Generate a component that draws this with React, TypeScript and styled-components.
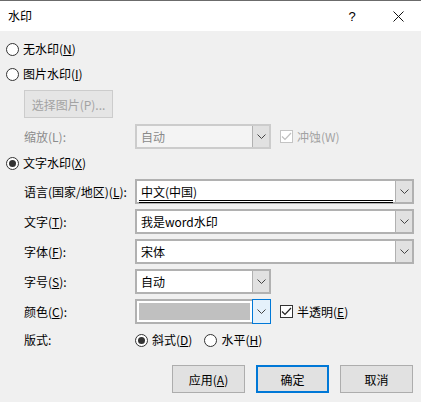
import React from 'react'
import styled, { createGlobalStyle } from 'styled-components'

const GlobalStyle = createGlobalStyle`
  html, body {
    margin: 0;
    padding: 0;
    background: #f0f0f0;
  }
  body {
    font-family: "Noto Sans CJK SC", "Noto Sans", sans-serif;
    font-size: 12px;
    color: #000;
  }
  * {
    box-sizing: border-box;
  }
`

type ComboProps = {
  width: number
  value?: string
  disabled?: boolean
  focused?: boolean
  underline?: boolean
  swatch?: boolean
}

function Chevron() {
  return (
    <svg width="9" height="5" viewBox="0 0 9 5">
      <polyline points="0.5,0.5 4.5,4.5 8.5,0.5" fill="none" stroke="#444" strokeWidth="1" />
    </svg>
  )
}

function Combo({ width, value, disabled, focused, underline, swatch }: ComboProps) {
  return (
    <ComboBox width={width} disabled={disabled}>
      <ComboField>
        {swatch ? (
          <Swatch />
        ) : (
          <ComboText disabled={disabled} underline={underline}>
            {value}
          </ComboText>
        )}
      </ComboField>
      <DropBtn focused={focused}>
        <Chevron />
      </DropBtn>
    </ComboBox>
  )
}

function Radio({ checked }: { checked?: boolean }) {
  return <RadioCircle>{checked && <RadioDot />}</RadioCircle>
}

function Check({ checked, disabled }: { checked?: boolean; disabled?: boolean }) {
  return (
    <CheckBox disabled={disabled}>
      {checked && (
        <svg width="11" height="9" viewBox="0 0 11 9">
          <polyline
            points="1,4.5 4,7.5 10,1"
            fill="none"
            stroke={disabled ? '#bfbfbf' : '#222'}
            strokeWidth="1.2"
          />
        </svg>
      )}
    </CheckBox>
  )
}

export default function App() {
  return (
    <>
      <GlobalStyle />
      <Dialog>
        <TitleBar>
          <Title>水印</Title>
          <TitleButtons>
            <Help>?</Help>
            <CloseBtn>
              <svg width="11" height="11" viewBox="0 0 11 11">
                <path d="M0.5 0.5 L10.5 10.5 M10.5 0.5 L0.5 10.5" stroke="#111" strokeWidth="1" />
              </svg>
            </CloseBtn>
          </TitleButtons>
        </TitleBar>

        <Body>
          <OptionRow top={10}>
            <Radio />
            <OptionLabel>
              无水印(<u>N</u>)
            </OptionLabel>
          </OptionRow>
          <OptionRow top={9}>
            <Radio />
            <OptionLabel>
              图片水印(<u>I</u>)
            </OptionLabel>
          </OptionRow>

          <PickButton>选择图片(P)...</PickButton>

          <FieldRow top={6}>
            <FieldLabel disabled>缩放(L):</FieldLabel>
            <Combo width={136} value="自动" disabled />
            <CheckRow>
              <Check checked disabled />
              <CheckLabel disabled>冲蚀(W)</CheckLabel>
            </CheckRow>
          </FieldRow>

          <OptionRow top={6}>
            <Radio checked />
            <OptionLabel>
              文字水印(<u>X</u>)
            </OptionLabel>
          </OptionRow>

          <FieldRow top={8}>
            <FieldLabel>
              语言(国家/地区)(<u>L</u>):
            </FieldLabel>
            <Combo width={279} value="中文(中国)" underline />
          </FieldRow>
          <FieldRow top={5}>
            <FieldLabel>
              文字(<u>T</u>):
            </FieldLabel>
            <Combo width={279} value="我是word水印" />
          </FieldRow>
          <FieldRow top={5}>
            <FieldLabel>
              字体(<u>F</u>):
            </FieldLabel>
            <Combo width={279} value="宋体" />
          </FieldRow>
          <FieldRow top={5}>
            <FieldLabel>
              字号(<u>S</u>):
            </FieldLabel>
            <Combo width={136} value="自动" />
          </FieldRow>
          <FieldRow top={5}>
            <FieldLabel>
              颜色(<u>C</u>):
            </FieldLabel>
            <Combo width={136} swatch focused />
            <CheckRow>
              <Check checked />
              <CheckLabel>
                半透明(<u>E</u>)
              </CheckLabel>
            </CheckRow>
          </FieldRow>

          <LayoutRow>
            <FieldLabel>版式:</FieldLabel>
            <RadioGroup>
              <Radio checked />
              <OptionLabel>
                斜式(<u>D</u>)
              </OptionLabel>
            </RadioGroup>
            <RadioGroup>
              <Radio />
              <OptionLabel>
                水平(<u>H</u>)
              </OptionLabel>
            </RadioGroup>
          </LayoutRow>

          <Footer>
            <DlgButton>
              应用(<u>A</u>)
            </DlgButton>
            <DlgButton primary>确定</DlgButton>
            <DlgButton>取消</DlgButton>
          </Footer>
        </Body>
      </Dialog>
    </>
  )
}

const Dialog = styled.div`
  width: 421px;
  height: 402px;
  background: #f0f0f0;
  border-top: 1px solid #6b6b6b;
  display: flex;
  flex-direction: column;
`

const TitleBar = styled.div`
  height: 30px;
  background: #fff;
  display: flex;
  align-items: center;
  justify-content: space-between;
  padding-left: 8px;
`

const Title = styled.div`
  font-size: 12px;
  line-height: 16px;
`

const TitleButtons = styled.div`
  display: flex;
  align-items: center;
  height: 100%;
`

const Help = styled.div`
  width: 46px;
  text-align: center;
  font-family: "Liberation Sans", sans-serif;
  font-size: 13px;
`

const CloseBtn = styled.div`
  width: 46px;
  height: 100%;
  display: flex;
  align-items: center;
  justify-content: center;
`

const Body = styled.div`
  display: flex;
  flex-direction: column;
  padding: 0 7px 0 6px;
`

const OptionRow = styled.div<{ top: number }>`
  display: flex;
  align-items: center;
  height: 16px;
  margin-top: ${(p) => p.top}px;
`

const RadioCircle = styled.div`
  width: 13px;
  height: 13px;
  border: 1px solid #333;
  border-radius: 50%;
  background: #fff;
  display: flex;
  align-items: center;
  justify-content: center;
  flex-shrink: 0;
`

const RadioDot = styled.div`
  width: 7px;
  height: 7px;
  border-radius: 50%;
  background: #333;
`

const OptionLabel = styled.span`
  margin-left: 4px;
  line-height: 16px;
  white-space: nowrap;
`

const PickButton = styled.div`
  margin: 8px 0 0 18px;
  width: 89px;
  height: 28px;
  background: #e5e5e5;
  border: 1px solid #cccccc;
  color: #a3a3a3;
  display: flex;
  align-items: center;
  justify-content: center;
  white-space: nowrap;
`

const FieldRow = styled.div<{ top: number }>`
  display: flex;
  align-items: center;
  margin-top: ${(p) => p.top}px;
  padding-left: 18px;
`

const FieldLabel = styled.span<{ disabled?: boolean }>`
  width: 111px;
  flex-shrink: 0;
  color: ${(p) => (p.disabled ? '#8c8c8c' : '#000')};
  white-space: nowrap;
  line-height: 16px;
`

const ComboBox = styled.div<{ width: number; disabled?: boolean }>`
  width: ${(p) => p.width}px;
  height: 25px;
  display: flex;
  border: 2px solid ${(p) => (p.disabled ? '#cccccc' : '#b1b1b1')};
  background: ${(p) => (p.disabled ? '#f4f4f4' : '#fff')};
`

const ComboField = styled.div`
  flex: 1;
  display: flex;
  align-items: center;
  padding: 0 2px;
  min-width: 0;
`

const ComboText = styled.span<{ disabled?: boolean; underline?: boolean }>`
  flex: 1;
  color: ${(p) => (p.disabled ? '#8a8a8a' : '#000')};
  line-height: 16px;
  padding: 0 0 0 2px;
  white-space: nowrap;
  border-bottom: ${(p) => (p.underline ? '3px double #000' : 'none')};
  margin-top: ${(p) => (p.underline ? '3px' : '0')};
`

const Swatch = styled.div`
  flex: 1;
  height: 17px;
  background: #c0c0c0;
`

const DropBtn = styled.div<{ focused?: boolean }>`
  margin: ${(p) => (p.focused ? '-2px -2px -2px 0' : '0')};
  width: ${(p) => (p.focused ? '19px' : '17px')};
  background: ${(p) => (p.focused ? '#e5f1fb' : '#e1e1e1')};
  border-left: ${(p) => (p.focused ? 'none' : '1px solid #b1b1b1')};
  border: ${(p) => (p.focused ? '1px solid #0078d7' : undefined)};
  display: flex;
  align-items: center;
  justify-content: center;
`

const CheckRow = styled.div`
  display: flex;
  align-items: center;
  margin-left: 9px;
`

const CheckBox = styled.div<{ disabled?: boolean }>`
  width: 13px;
  height: 13px;
  border: 1px solid ${(p) => (p.disabled ? '#c4c4c4' : '#333')};
  background: #fff;
  display: flex;
  align-items: center;
  justify-content: center;
`

const CheckLabel = styled.span<{ disabled?: boolean }>`
  margin-left: 4px;
  color: ${(p) => (p.disabled ? '#a3a3a3' : '#000')};
  white-space: nowrap;
  line-height: 16px;
`

const LayoutRow = styled.div`
  display: flex;
  align-items: center;
  height: 16px;
  margin-top: 8px;
  padding-left: 18px;
`

const RadioGroup = styled.div`
  display: flex;
  align-items: center;
  margin-right: 12px;
`

const Footer = styled.div`
  display: flex;
  justify-content: flex-end;
  gap: 11px;
  margin-top: 17px;
  padding-right: 1px;
`

const DlgButton = styled.div<{ primary?: boolean }>`
  width: 73px;
  height: 28px;
  background: #e1e1e1;
  border: ${(p) => (p.primary ? '2px solid #0078d7' : '1px solid #adadad')};
  display: flex;
  align-items: center;
  justify-content: center;
  white-space: nowrap;
`
